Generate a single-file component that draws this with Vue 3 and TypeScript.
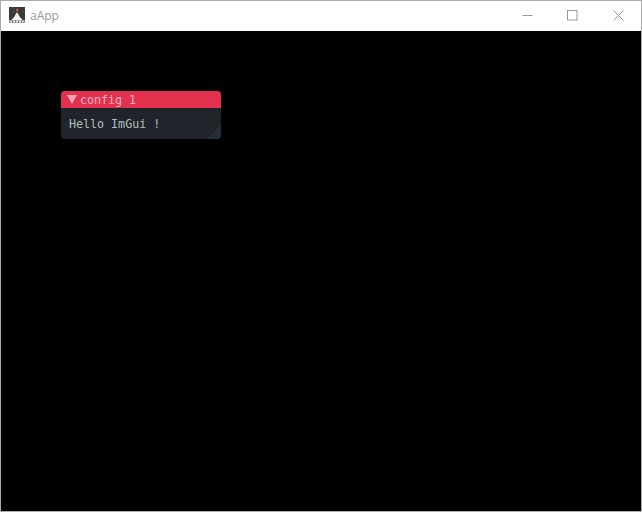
<script setup lang="ts">
const title: string = 'aApp'
const stripCells: { x: number; w: number; c: string }[] = [
  { x: 1, w: 2, c: '#d8d8d8' },
  { x: 3, w: 1, c: '#6a6a6a' },
  { x: 4, w: 2, c: '#f0f0f0' },
  { x: 6, w: 1, c: '#8a8a8a' },
  { x: 7, w: 2, c: '#e4e4e4' },
  { x: 9, w: 1, c: '#777777' },
  { x: 10, w: 2, c: '#ececec' },
  { x: 12, w: 1, c: '#8a8a8a' },
  { x: 13, w: 2, c: '#d0d0d0' },
]
</script>

<template>
  <div class="window">
    <header class="titlebar">
      <div class="title-left">
        <svg class="app-icon" width="16" height="16" viewBox="0 0 16 16">
          <rect width="16" height="16" fill="#3c3c3c" />
          <path d="M2 13.5 L5.5 9.5 L7 6.5 L8 5.5 L9 6.5 L10.5 9.5 L14 13.5 Z" fill="#f2f2f2" />
          <rect x="7.5" y="2" width="1.5" height="1.5" fill="#e8a23a" />
          <rect x="7.5" y="3.5" width="1.5" height="1.5" fill="#d0402c" />
          <rect y="13" width="16" height="3" fill="#8f8f8f" />
          <rect v-for="cell in stripCells" :key="cell.x" :x="cell.x" y="13.5" :width="cell.w" height="2" :fill="cell.c" />
        </svg>
        <span class="title-text">{{ title }}</span>
      </div>
      <div class="controls">
        <div class="ctl">
          <svg width="11" height="11" viewBox="0 0 11 11"><path d="M0.5 5.5H10.5" stroke="#999" fill="none" /></svg>
        </div>
        <div class="ctl">
          <svg width="11" height="11" viewBox="0 0 11 11"><rect x="0.5" y="0.5" width="9.5" height="9.5" stroke="#999" fill="none" /></svg>
        </div>
        <div class="ctl">
          <svg width="11" height="11" viewBox="0 0 11 11"><path d="M0.5 0.5L10.5 10.5M10.5 0.5L0.5 10.5" stroke="#999" fill="none" /></svg>
        </div>
      </div>
    </header>
    <main class="canvas">
      <section class="panel">
        <div class="panel-head">
          <span class="arrow"></span>
          <span>config 1</span>
        </div>
        <div class="panel-body">Hello ImGui !</div>
        <span class="grip"></span>
      </section>
    </main>
  </div>
</template>

<style scoped>
.window {
  width: 642px;
  height: 512px;
  box-sizing: border-box;
  border: 1px solid #ababab;
  display: flex;
  flex-direction: column;
  background: #000;
}
.titlebar {
  height: 30px;
  flex: none;
  background: #fff;
  display: flex;
  justify-content: space-between;
}
.title-left {
  display: flex;
  align-items: center;
  padding-left: 8px;
  padding-bottom: 2px;
  gap: 5px;
}
.app-icon { display: block; }
.title-text {
  font: 12px "Open Sans", sans-serif;
  color: #9a9a9a;
}
.controls { display: flex; }
.ctl {
  width: 45.5px;
  display: flex;
  align-items: center;
  justify-content: center;
  padding-bottom: 1px;
}
.canvas {
  flex: 1;
  background: #000;
  padding: 60px 0 0 60px;
}
.panel {
  position: relative;
  width: 160px;
  height: 48px;
  border-radius: 4px;
  overflow: hidden;
  background: #20252c;
  font: 11.67px "DejaVu Sans Mono", monospace;
}
.panel-head {
  height: 17px;
  background: #e2304e;
  color: #efb4c0;
  display: flex;
  align-items: center;
  padding-left: 6px;
  gap: 3px;
}
.arrow {
  width: 0;
  height: 0;
  border-left: 5px solid transparent;
  border-right: 5px solid transparent;
  border-top: 9px solid #efa6b4;
  margin-bottom: 1px;
}
.panel-body {
  padding: 9px 8px 0;
  color: #b4bebb;
}
.grip {
  position: absolute;
  right: 0;
  bottom: 0;
  width: 0;
  height: 0;
  border-left: 14px solid transparent;
  border-bottom: 14px solid #272e35;
}
</style>
